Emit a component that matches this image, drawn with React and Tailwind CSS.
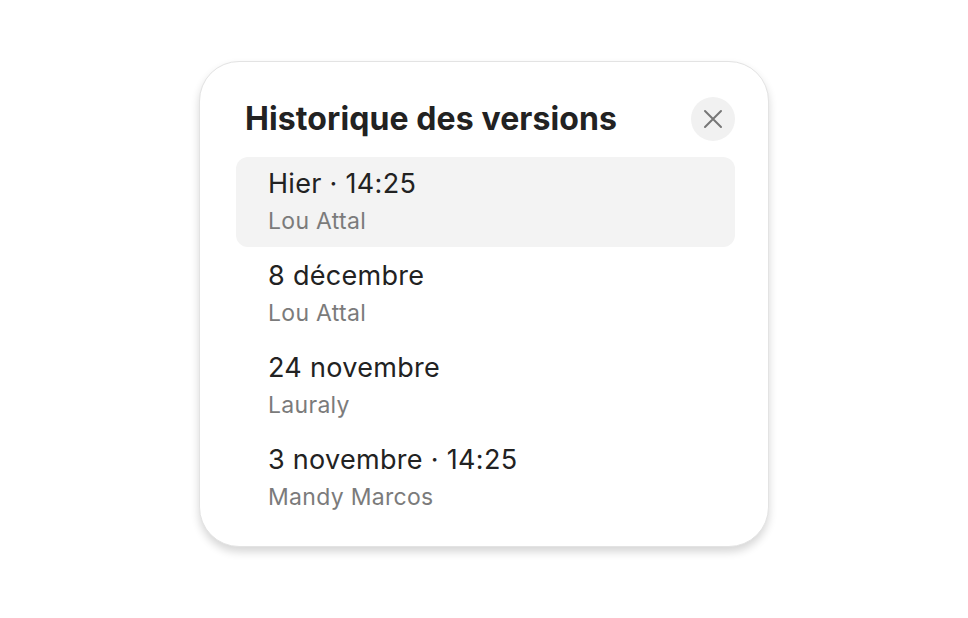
import React from 'react';

const versions = [
  { date: 'Hier · 14:25', author: 'Lou Attal', active: true },
  { date: '8 décembre', author: 'Lou Attal' },
  { date: '24 novembre', author: 'Lauraly' },
  { date: '3 novembre · 14:25', author: 'Mandy Marcos' },
];

const App = () => {
  return (
    <div
      className="flex min-h-screen items-start justify-center bg-white pt-[61px]"
      style={{ fontFamily: 'Inter, "Noto Sans", sans-serif' }}
    >
      <div className="w-[570px] rounded-[40px] border border-[#e3e3e3] bg-white pb-[23px] pl-[36px] pr-[33px] pt-[35px] shadow-[0_5px_8px_rgba(0,0,0,0.16)]">
        <div className="flex h-[44px] items-center justify-between">
          <h2 className="pl-[9px] text-[32px] font-bold tracking-[0.1px] text-[#222]">
            Historique des versions
          </h2>
          <button className="flex h-[44px] w-[44px] items-center justify-center rounded-full bg-[#f1f1f1]">
            <svg width="20" height="20" viewBox="0 0 20 20" fill="none">
              <path d="M2 2 L18 18 M18 2 L2 18" stroke="#777" strokeWidth="2" strokeLinecap="round" />
            </svg>
          </button>
        </div>

        <div className="mt-[16px] flex flex-col gap-[2px]">
          {versions.map((v, i) => (
            <div
              key={i}
              className={`flex h-[90px] flex-col rounded-[12px] px-[32px] pt-[11px] ${
                v.active ? 'bg-[#f3f3f3]' : ''
              }`}
            >
              <div className="text-[27px] leading-[32px] tracking-[0.3px] text-[#222]">{v.date}</div>
              <div className="mt-[7px] text-[23px] leading-[28px] tracking-[0.3px] text-[#7b7b7b]">
                {v.author}
              </div>
            </div>
          ))}
        </div>
      </div>
    </div>
  );
};

export default App;
